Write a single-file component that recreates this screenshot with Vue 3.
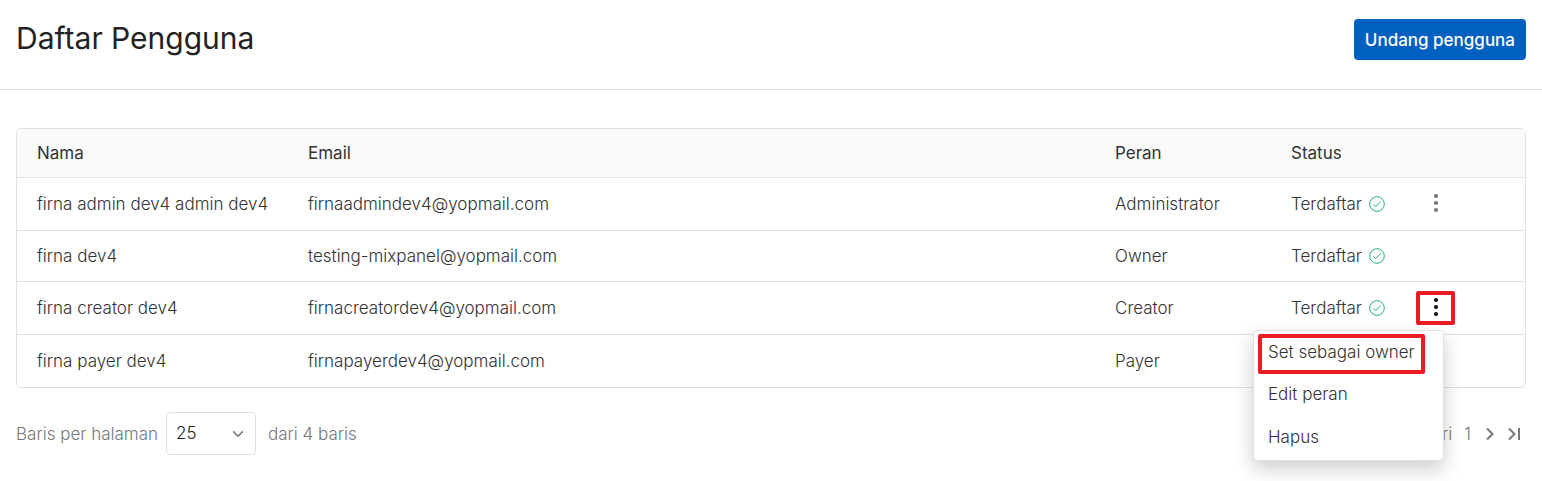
<script setup>
import { ref } from 'vue'

const users = [
  { name: 'firna admin dev4 admin dev4', email: 'firnaadmindev4@yopmail.com', role: 'Administrator', status: 'Terdaftar', actions: true },
  { name: 'firna dev4', email: 'testing-mixpanel@yopmail.com', role: 'Owner', status: 'Terdaftar', actions: false },
  { name: 'firna creator dev4', email: 'firnacreatordev4@yopmail.com', role: 'Creator', status: 'Terdaftar', actions: true },
  { name: 'firna payer dev4', email: 'firnapayerdev4@yopmail.com', role: 'Payer', status: '', actions: true },
]
const menuItems = ['Set sebagai owner', 'Edit peran', 'Hapus']
const openRow = ref(2)
const pageSize = ref('25')
</script>

<template>
  <main class="page">
    <header class="header">
      <h1>Daftar Pengguna</h1>
      <button type="button" class="invite">Undang pengguna</button>
    </header>

    <section class="content">
      <div class="card">
        <table>
          <colgroup>
            <col class="c-name" />
            <col />
            <col class="c-role" />
            <col class="c-status" />
            <col class="c-actions" />
          </colgroup>
          <thead>
            <tr>
              <th scope="col">Nama</th>
              <th scope="col">Email</th>
              <th scope="col">Peran</th>
              <th scope="col">Status</th>
              <td></td>
            </tr>
          </thead>
          <tbody>
            <tr v-for="(user, i) in users" :key="user.email" :class="{ compact: !user.actions }">
              <td>{{ user.name }}</td>
              <td>{{ user.email }}</td>
              <td>{{ user.role }}</td>
              <td>
                <span v-if="user.status" class="status">
                  {{ user.status }}
                  <svg width="16" height="16" viewBox="0 0 16 16" aria-hidden="true">
                    <circle cx="8" cy="8" r="7.3" />
                    <path d="M4.4 8.4 6.8 10.6 11.8 5.4" />
                  </svg>
                </span>
              </td>
              <td class="actions">
                <div v-if="user.actions" class="menu-anchor">
                  <button
                    type="button"
                    class="dots"
                    :class="{ active: openRow === i }"
                    :aria-label="'Menu ' + user.name"
                    @click="openRow = openRow === i ? -1 : i"
                  >
                    <svg width="6" height="20" viewBox="0 0 6 20" aria-hidden="true">
                      <circle cx="3" cy="3" r="2.1" />
                      <circle cx="3" cy="10" r="2.1" />
                      <circle cx="3" cy="17" r="2.1" />
                    </svg>
                  </button>
                  <div v-if="openRow === i" class="menu">
                    <button
                      v-for="(item, n) in menuItems"
                      :key="item"
                      type="button"
                      class="menu-item"
                      :class="{ marked: n === 0 }"
                    >{{ item }}</button>
                  </div>
                </div>
              </td>
            </tr>
          </tbody>
        </table>
      </div>

      <footer class="footer">
        <div class="rows">
          <label for="page-size">Baris per halaman</label>
          <span class="select">
            <select id="page-size" v-model="pageSize">
              <option>25</option>
            </select>
            <svg width="12" height="8" viewBox="0 0 12 8" aria-hidden="true">
              <path d="M1.2 1.4 6 6.2 10.8 1.4" />
            </svg>
          </span>
          <span class="total">dari 4 baris</span>
        </div>
        <nav class="pager" aria-label="Halaman">
          <span>dari</span>
          <span class="count">1</span>
          <button type="button" aria-label="Halaman berikutnya">
            <svg width="8" height="14" viewBox="0 0 8 14"><path d="M1 1.5 6.5 7 1 12.5" /></svg>
          </button>
          <button type="button" aria-label="Halaman terakhir">
            <svg width="12" height="14" viewBox="0 0 12 14"><path d="M1 1.5 6.5 7 1 12.5M11 1V13" /></svg>
          </button>
        </nav>
      </footer>
    </section>
  </main>
</template>

<style>
body {
  margin: 0;
  background: #fff;
}
</style>

<style scoped>
.page {
  font-family: Inter, "Liberation Sans", sans-serif;
  font-size: 17px;
  font-weight: 300;
  line-height: 24px;
  color: #333;
}
.page * {
  box-sizing: border-box;
}
button,
select {
  font: inherit;
  color: inherit;
  margin: 0;
  cursor: pointer;
}
.header {
  display: flex;
  justify-content: space-between;
  align-items: flex-start;
  padding: 19px 16px 29px;
  border-bottom: 1px solid #e0e0e0;
}
h1 {
  margin: 0;
  font-size: 30px;
  line-height: 38px;
  font-weight: 400;
  color: #222;
}
.invite {
  height: 41px;
  padding: 0 11px;
  border: 0;
  border-radius: 4px;
  background: #0060c0;
  color: #fff;
  font-weight: 500;
}
.content {
  padding: 38px 16px 26px;
}
.card {
  border: 1px solid #e0e0e0;
  border-radius: 5px;
}
table {
  width: 100%;
  table-layout: fixed;
  border-collapse: separate;
  border-spacing: 0;
}
.c-name { width: 271px; }
.c-role { width: 176px; }
.c-status { width: 129px; }
.c-actions { width: 125px; }
th,
td {
  padding: 0 0 0 20px;
  text-align: left;
  vertical-align: middle;
  white-space: nowrap;
}
thead tr {
  height: 48px;
}
thead th,
thead td {
  background: #fafafa;
  font-weight: 400;
}
thead th:first-child {
  border-top-left-radius: 4px;
}
thead td:last-child {
  border-top-right-radius: 4px;
}
tbody tr {
  height: 53px;
}
tbody tr.compact {
  height: 51px;
}
tbody td {
  border-top: 1px solid #e0e0e0;
}
.status {
  display: flex;
  align-items: center;
  gap: 7px;
}
.status svg {
  fill: none;
  stroke: #27ae74;
  stroke-width: 1;
}
td.actions {
  padding-left: 16px;
}
.menu-anchor {
  position: relative;
  width: 39px;
  height: 34px;
}
.dots {
  display: flex;
  align-items: flex-start;
  justify-content: center;
  width: 39px;
  height: 34px;
  padding: 6px 0 0;
  border: 0;
  background: none;
}
.dots svg {
  fill: #777;
}
.dots.active {
  outline: 4px solid #ed1c24;
  outline-offset: -4px;
  border-radius: 2px;
}
.dots.active svg {
  fill: #111;
}
.menu {
  position: absolute;
  z-index: 2;
  top: 39px;
  right: 11px;
  width: 191px;
  padding: 3px 4px 0;
  border: 1px solid #e0e0e0;
  border-radius: 4px;
  background: #fff;
  box-shadow: 0 8px 20px rgba(0, 0, 0, 0.2);
}
.menu-item {
  display: block;
  height: 43px;
  padding: 0 10px 4px;
  border: 0;
  background: none;
  text-align: left;
  white-space: nowrap;
}
.menu-item.marked {
  height: 40px;
  outline: 4px solid #ed1c24;
  outline-offset: -4px;
  border-radius: 2px;
}
.footer {
  display: flex;
  justify-content: space-between;
  align-items: center;
  margin-top: 24px;
  color: #777;
}
.rows {
  display: flex;
  align-items: center;
}
.select {
  position: relative;
  margin: 0 12px 0 8px;
}
.select select {
  display: block;
  width: 90px;
  height: 43px;
  padding: 0 9px 2px;
  appearance: none;
  border: 1px solid #e0e0e0;
  border-radius: 4px;
  background: #fff;
  color: #222;
}
.select svg {
  position: absolute;
  top: 18px;
  right: 12px;
  pointer-events: none;
  fill: none;
  stroke: #777;
  stroke-width: 1.5;
}
.pager {
  display: flex;
  align-items: center;
  padding-right: 6px;
}
.pager .count {
  margin: 0 15px 0 12px;
}
.pager button {
  display: flex;
  padding: 0;
  border: 0;
  background: none;
}
.pager button + button {
  margin-left: 14px;
}
.pager svg {
  fill: none;
  stroke: #777;
  stroke-width: 2;
}
</style>
